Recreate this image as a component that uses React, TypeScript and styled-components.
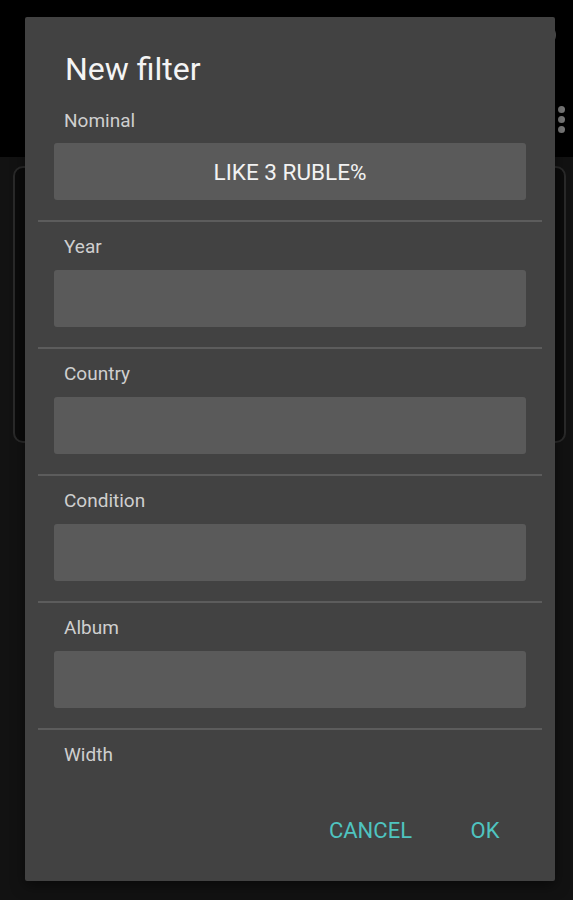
import React from "react";
import styled, { createGlobalStyle } from "styled-components";

const GlobalStyle = createGlobalStyle`
    html, body {
        margin: 0;
        padding: 0;
        background: #121212;
        font-family: Roboto, "Noto Sans", "Liberation Sans", sans-serif;
    }
`;

const fields = [
    { label: "Nominal", value: "LIKE 3 RUBLE%" },
    { label: "Year", value: "" },
    { label: "Country", value: "" },
    { label: "Condition", value: "" },
    { label: "Album", value: "" },
    { label: "Width", value: "" },
];

const App: React.FC = () => {
    return (
        <>
            <GlobalStyle />
            <Screen>
                <Toolbar>
                    <ToolbarIcons>
                        <Avatar />
                        <Overflow>
                            <Dot />
                            <Dot />
                            <Dot />
                        </Overflow>
                    </ToolbarIcons>
                </Toolbar>
                <Content>
                    <Card />
                </Content>

                <Dialog>
                    <Title>New filter</Title>
                    <Body>
                        {fields.map((f, i) => (
                            <React.Fragment key={f.label}>
                                {i > 0 && <Divider />}
                                <Section first={i === 0}>
                                    <Label first={i === 0}>{f.label}</Label>
                                    <Field>{f.value}</Field>
                                </Section>
                            </React.Fragment>
                        ))}
                    </Body>
                    <Actions>
                        <TextButton>Cancel</TextButton>
                        <TextButton>OK</TextButton>
                    </Actions>
                </Dialog>
            </Screen>
        </>
    );
};

export default App;

const Screen = styled.div`
    position: relative;
    width: 573px;
    height: 900px;
    overflow: hidden;
    background: #121212;
`;

const Toolbar = styled.div`
    height: 157px;
    background: #000;
    display: flex;
    justify-content: flex-end;
    padding-right: 8px;
`;

const ToolbarIcons = styled.div`
    display: flex;
    flex-direction: column;
    align-items: flex-end;
    padding-top: 24px;
`;

const Avatar = styled.div`
    width: 22px;
    height: 22px;
    border-radius: 50%;
    background: #5c5c5c;
    margin-right: 9px;
`;

const Overflow = styled.div`
    display: flex;
    flex-direction: column;
    gap: 3px;
    margin-top: 60px;
`;

const Dot = styled.span`
    width: 7px;
    height: 7px;
    border-radius: 50%;
    background: #7a7a7a;
`;

const Content = styled.div`
    padding: 9px 7px 0 13px;
`;

const Card = styled.div`
    height: 273px;
    border: 2px solid #2a2a2a;
    border-radius: 10px;
    background: #0b0b0b;
`;

const Dialog = styled.div`
    position: absolute;
    left: 25px;
    top: 17px;
    width: 530px;
    height: 864px;
    background: #424242;
    border-radius: 2px;
    display: flex;
    flex-direction: column;
    box-shadow: 0 4px 14px rgba(0, 0, 0, 0.5);
`;

const Title = styled.h1`
    margin: 0;
    padding: 32px 40px 0;
    height: 40px;
    line-height: 40px;
    font-size: 32px;
    font-weight: 400;
    color: #f4f4f4;
`;

const Body = styled.div`
    flex: 1;
    overflow: hidden;
`;

const Section = styled.div<{ first?: boolean }>`
    padding: ${(p) => (p.first ? "20px" : "13px")} 29px 20px;
`;

const Label = styled.div<{ first?: boolean }>`
    height: 24px;
    line-height: 24px;
    padding-left: 10px;
    margin-bottom: ${(p) => (p.first ? "10px" : "11px")};
    font-size: 19px;
    color: #cfcfcf;
`;

const Field = styled.div`
    height: 57px;
    border-radius: 3px;
    background: #5a5a5a;
    display: flex;
    align-items: center;
    justify-content: center;
    font-size: 22.5px;
    color: #f2f2f2;
`;

const Divider = styled.div`
    height: 2px;
    margin: 0 13px;
    background: #5c5c5c;
`;

const Actions = styled.div`
    display: flex;
    justify-content: flex-end;
    gap: 13px;
    padding: 19px 22px 16px 0;
`;

const TextButton = styled.button`
    min-width: 96px;
    height: 70px;
    padding: 0 12px;
    border: none;
    background: transparent;
    font-family: Roboto, "Noto Sans", "Liberation Sans", sans-serif;
    font-size: 22px;
    font-weight: 400;
    text-transform: uppercase;
    color: #4fc4c0;
    cursor: pointer;
`;
